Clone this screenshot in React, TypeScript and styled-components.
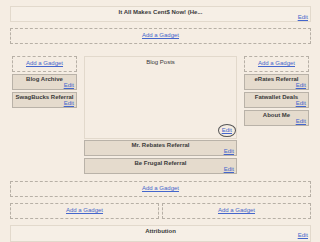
import React from 'react';
import styled, { createGlobalStyle } from 'styled-components';

const GlobalStyle = createGlobalStyle`
  html, body {
    margin: 0;
    padding: 0;
    background: #f5ede3;
  }
  body {
    font-family: "Liberation Sans", Arial, sans-serif;
    font-size: 6px;
    color: #333;
  }
`;

const Page = styled.div`
  width: 320px;
  height: 242px;
  overflow: hidden;
  box-sizing: border-box;
  padding: 6px 9px 0 10px;
  display: flex;
  flex-direction: column;
`;

const Section = styled.div<{ $height: number; $mt?: number }>`
  box-sizing: border-box;
  height: ${({ $height }) => $height}px;
  margin-top: ${({ $mt = 0 }) => $mt}px;
  border: 1px solid #e2d9cc;
  background: #f6efe6;
  display: flex;
  flex-direction: column;
  padding: 2px 2px 0;
`;

const Title = styled.div<{ $bold?: boolean }>`
  text-align: center;
  font-weight: ${({ $bold = true }) => ($bold ? 'bold' : 'normal')};
  line-height: 7px;
  color: #3a3a3a;
  white-space: nowrap;
  overflow: hidden;
`;

const EditLink = styled.a<{ $ring?: boolean; $mt?: number }>`
  align-self: flex-end;
  color: #4466cc;
  text-decoration: underline;
  line-height: 7px;
  margin-top: ${({ $mt = 0 }) => $mt}px;
  cursor: pointer;
  ${({ $ring }) =>
    $ring &&
    `
    border: 1px solid #555;
    border-radius: 50%;
    padding: 2px 3px;
    margin-right: -2px;
  `}
`;

const AddBox = styled.div`
  box-sizing: border-box;
  flex: 1;
  height: 16px;
  border: 1px dashed #b7b0a6;
  display: flex;
  justify-content: center;
  padding-top: 3px;
`;

const AddLink = styled.a`
  color: #4466cc;
  text-decoration: underline;
  line-height: 7px;
  cursor: pointer;
`;

const Columns = styled.div`
  margin-top: 12px;
  padding: 0 2px;
  display: flex;
  gap: 7px;
  align-items: flex-start;
`;

const SideCol = styled.div`
  width: 65px;
  display: flex;
  flex-direction: column;
  gap: 2px;
`;

const MainCol = styled.div`
  width: 153px;
  display: flex;
  flex-direction: column;
`;

const Gadget = styled.div`
  box-sizing: border-box;
  height: 16px;
  border: 1px solid #b9b2a8;
  background: #e5dbcd;
  display: flex;
  flex-direction: column;
  padding: 1px 2px 0;
`;

const PostsBox = styled.div`
  box-sizing: border-box;
  height: 83px;
  border: 1px solid #e2d9cc;
  display: flex;
  flex-direction: column;
  justify-content: space-between;
  padding: 2px 2px 1px;
  margin-bottom: 1px;
`;

const Stack = styled.div`
  display: flex;
  flex-direction: column;
  gap: 2px;
`;

const Row = styled.div<{ $mt?: number }>`
  display: flex;
  gap: 3px;
  margin-top: ${({ $mt = 0 }) => $mt}px;
`;

const AddGadget = () => (
  <AddBox>
    <AddLink>Add a Gadget</AddLink>
  </AddBox>
);

const Widget = ({ title }: { title: string }) => (
  <Gadget>
    <Title>{title}</Title>
    <EditLink>Edit</EditLink>
  </Gadget>
);

export default function App() {
  return (
    <>
      <GlobalStyle />
      <Page>
        <Section $height={17}>
          <Title>It All Makes Cent$ Now! (He...</Title>
          <EditLink $mt={-2}>Edit</EditLink>
        </Section>
        <Row $mt={6}>
          <AddGadget />
        </Row>
        <Columns>
          <SideCol>
            <Row>
              <AddGadget />
            </Row>
            <Widget title="Blog Archive" />
            <Widget title="SwagBucks Referral" />
          </SideCol>
          <MainCol>
            <PostsBox>
              <Title $bold={false}>Blog Posts</Title>
              <EditLink $ring>Edit</EditLink>
            </PostsBox>
            <Stack>
              <Widget title="Mr. Rebates Referral" />
              <Widget title="Be Frugal Referral" />
            </Stack>
          </MainCol>
          <SideCol>
            <Row>
              <AddGadget />
            </Row>
            <Widget title="eRates Referral" />
            <Widget title="Fatwallet Deals" />
            <Widget title="About Me" />
          </SideCol>
        </Columns>
        <Row $mt={7}>
          <AddGadget />
        </Row>
        <Row $mt={6}>
          <AddGadget />
          <AddGadget />
        </Row>
        <Section $height={24} $mt={6}>
          <Title>Attribution</Title>
          <EditLink $mt={-3}>Edit</EditLink>
        </Section>
      </Page>
    </>
  );
}
